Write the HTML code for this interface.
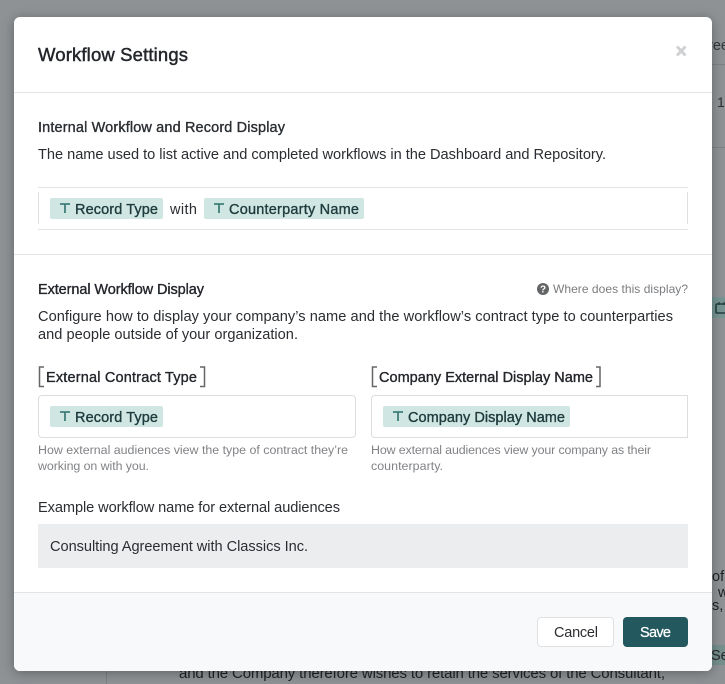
<!DOCTYPE html>
<html><head><meta charset="utf-8"><style>
html,body{margin:0;padding:0;width:725px;height:684px;overflow:hidden;background:#8e9295}
svg{display:block;position:absolute;left:0;top:0}
text{font-family:"Liberation Sans",sans-serif;white-space:pre}
.m{stroke-width:.35px}
</style></head><body>
<svg width="725" height="684" viewBox="0 0 725 684" xmlns="http://www.w3.org/2000/svg">
<defs>
<filter id="sh" x="-10%" y="-10%" width="120%" height="120%"><feDropShadow dx="0" dy="2" stdDeviation="6" flood-color="#000" flood-opacity=".32"/></filter>
</defs>
<rect width="725" height="684" fill="#8e9295"/>
<rect x="712" y="64" width="13" height="1" fill="#7e8184"/>
<rect x="712" y="147" width="13" height="1" fill="#7e8184"/>
<rect x="106" y="671" width="1" height="13" fill="#7e8184"/>
<text x="708" y="50" font-size="14.500" fill="#37393b">ree</text>
<text x="717" y="107" font-size="14" fill="#2e3032">10</text>
<rect x="712" y="297" width="13" height="21" fill="#769593"/>
<rect x="716" y="304" width="11" height="9" rx="1" fill="none" stroke="#24403f" stroke-width="1.600"/>
<path d="M719 302V305M724 302V305" stroke="#24403f" stroke-width="1.300"/>
<text x="712" y="581" font-size="14.500" fill="#1f2123">of</text>
<text x="718" y="597" font-size="14.500" fill="#1f2123">w</text>
<text x="712" y="610" font-size="14.500" fill="#1f2123">s,</text>
<rect x="712" y="645" width="13" height="20" fill="#76908e"/>
<text x="711" y="660" font-size="14.500" fill="#26282a">Se</text>
<text x="179" y="678" font-size="15" fill="#1f2123" textLength="486">and the Company therefore wishes to retain the services of the Consultant,</text>

<rect x="14" y="17" width="698" height="654" rx="6" fill="#fff" filter="url(#sh)"/>
<path d="M14 593H712V665a6 6 0 0 1-6 6H20a6 6 0 0 1-6-6Z" fill="#f8f9fa"/>
<rect x="14" y="92" width="698" height="1" fill="#e3e4e6"/>
<rect x="14" y="254" width="698" height="1" fill="#e3e4e6"/>
<rect x="14" y="592" width="698" height="1" fill="#e1e3e5"/>

<text x="38" y="61" font-size="18.500" fill="#22252a" stroke="#22252a" stroke-width=".45" textLength="150">Workflow Settings</text>
<path d="M677 46.500L685.500 55.500M685.500 46.500L677 55.500" stroke="#cfd0d1" stroke-width="2.800" fill="none"/>

<text x="38" y="132" font-size="14.500" fill="#2a2d31" stroke="#2a2d31" class="m" textLength="247">Internal Workflow and Record Display</text>
<text x="38" y="159" font-size="14.600" fill="#2a2d31" textLength="568">The name used to list active and completed workflows in the Dashboard and Repository.</text>

<rect x="38" y="187" width="650" height="1" fill="#e2e3e5"/>
<rect x="38" y="229" width="650" height="1" fill="#e2e3e5"/>
<rect x="38" y="192" width="1" height="32" fill="#dedfe1"/>
<rect x="687" y="192" width="1" height="32" fill="#dedfe1"/>

<rect x="50" y="198" width="113" height="21" rx="2" fill="#cfe6e2"/>
<path d="M60 204H70M65 204V213" stroke="#3f7f78" stroke-width="1.800" fill="none"/>
<text x="75" y="214" font-size="14.500" fill="#1d3a3c" stroke="#1d3a3c" class="m" textLength="83">Record Type</text>
<text x="170" y="214" font-size="14.500" fill="#2a2d31" textLength="27">with</text>
<rect x="204" y="198" width="160" height="21" rx="2" fill="#cfe6e2"/>
<path d="M214 204H224M219 204V213" stroke="#3f7f78" stroke-width="1.800" fill="none"/>
<text x="229" y="214" font-size="14.500" fill="#1d3a3c" stroke="#1d3a3c" class="m" textLength="130">Counterparty Name</text>

<text x="38" y="294" font-size="14.500" fill="#22252a" stroke="#22252a" class="m" textLength="166">External Workflow Display</text>
<circle cx="543" cy="289" r="6" fill="#626466"/>
<text x="543" y="292.500" font-size="10" font-weight="700" fill="#fff" text-anchor="middle">?</text>
<text x="553" y="293" font-size="12" fill="#7a7c7f" textLength="135">Where does this display?</text>
<text x="38" y="321" font-size="14.600" fill="#2a2d31" textLength="635">Configure how to display your company’s name and the workflow’s contract type to counterparties</text>
<text x="38" y="339" font-size="14.600" fill="#2a2d31" textLength="260">and people outside of your organization.</text>

<path d="M44 367H39.500V386.500H44" stroke="#666" stroke-width="1.500" fill="none"/>
<path d="M200 367H204.500V386.500H200" stroke="#666" stroke-width="1.500" fill="none"/>
<text x="46" y="382" font-size="14.500" fill="#22252a" stroke="#22252a" class="m" textLength="151">External Contract Type</text>
<path d="M377 367H372.500V386.500H377" stroke="#666" stroke-width="1.500" fill="none"/>
<path d="M596 367H600V386.500H596" stroke="#666" stroke-width="1.500" fill="none"/>
<text x="379" y="382" font-size="14.500" fill="#22252a" stroke="#22252a" class="m" textLength="214">Company External Display Name</text>

<rect x="38.500" y="395.500" width="317" height="42" rx="3.500" fill="#fff" stroke="#dcdde0"/>
<rect x="50" y="406" width="113" height="21" rx="2" fill="#cfe6e2"/>
<path d="M60 412H70M65 412V421" stroke="#3f7f78" stroke-width="1.800" fill="none"/>
<text x="75" y="422" font-size="14.500" fill="#1d3a3c" stroke="#1d3a3c" class="m" textLength="83">Record Type</text>

<path d="M687.500 395.500H375a3.500 3.500 0 0 0-3.500 3.500V434a3.500 3.500 0 0 0 3.500 3.500H687.500V395.500" fill="#fff" stroke="#dcdde0"/>
<rect x="383" y="406" width="187" height="21" rx="2" fill="#cfe6e2"/>
<path d="M393 412H403M398 412V421" stroke="#3f7f78" stroke-width="1.800" fill="none"/>
<text x="408" y="422" font-size="14.500" fill="#1d3a3c" stroke="#1d3a3c" class="m" textLength="157">Company Display Name</text>

<text x="38" y="454" font-size="12.400" fill="#808285" textLength="310">How external audiences view the type of contract they’re</text>
<text x="38" y="470" font-size="12.400" fill="#808285" textLength="111">working on with you.</text>
<text x="371" y="454" font-size="12.400" fill="#808285" textLength="280">How external audiences view your company as their</text>
<text x="371" y="470" font-size="12.400" fill="#808285" textLength="72">counterparty.</text>

<text x="38" y="512" font-size="14.600" fill="#2a2d31" textLength="302">Example workflow name for external audiences</text>
<rect x="38" y="524" width="650" height="44" fill="#ecedef"/>
<text x="50" y="551" font-size="14.600" fill="#2a2d31" textLength="258">Consulting Agreement with Classics Inc.</text>

<rect x="537.500" y="617.500" width="76" height="29" rx="3.500" fill="#fff" stroke="#e0e1e3"/>
<text x="554" y="637" font-size="14.500" fill="#2a2d31" textLength="44">Cancel</text>
<rect x="623" y="617" width="65" height="30" rx="4" fill="#23595e"/>
<text x="640" y="637" font-size="14.500" fill="#fff" stroke="#fff" stroke-width=".25" textLength="31">Save</text>
</svg>
</body></html>
